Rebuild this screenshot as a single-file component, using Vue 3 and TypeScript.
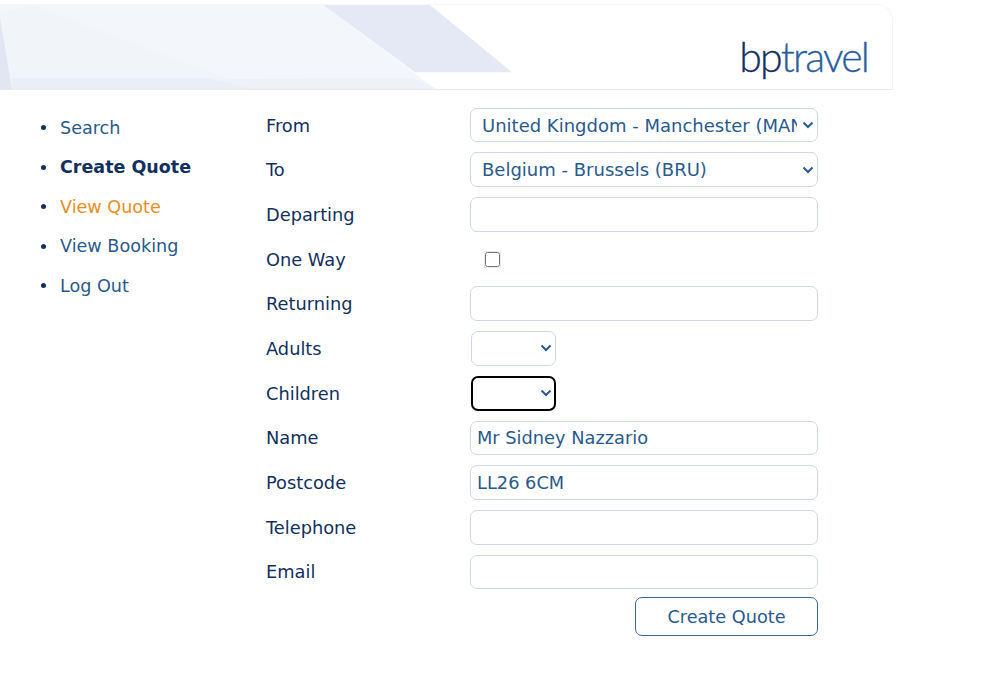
<script setup lang="ts">
import { ref } from 'vue'

const links = [
  { label: 'Search', kind: '' },
  { label: 'Create Quote', kind: 'current' },
  { label: 'View Quote', kind: 'hover' },
  { label: 'View Booking', kind: '' },
  { label: 'Log Out', kind: '' }
]

const from = ref('MAN')
const to = ref('BRU')
const name = ref('Mr Sidney Nazzario')
const postcode = ref('LL26 6CM')
</script>

<template>
  <div class="page">
    <header class="banner">
      <svg class="shapes" viewBox="0 0 893 86" preserveAspectRatio="none" aria-hidden="true">
        <polygon points="323,0 430,0 512,68 415,68" fill="#e4e9f5" />
        <polygon points="0,0 323,0 436,85 0,85" fill="#f3f6fb" />
        <polygon points="0,8 30,0 255,85 12,85" fill="#f1f4f9" />
        <polygon points="12,74 210,74 255,85 12,85" fill="#e9eef7" />
        <polygon points="0,12 12,85 0,85" fill="#e2e6f2" />
        <polygon points="210,75 415,74 436,85 255,85" fill="#eff1f9" />
      </svg>
      <div class="logo"><span class="bp">bp</span><span class="travel">travel</span></div>
    </header>

    <div class="main">
      <ul class="nav">
        <li v-for="link in links" :key="link.label" :class="link.kind">{{ link.label }}</li>
      </ul>

      <form class="form" @submit.prevent>
        <label>From</label>
        <select v-model="from" class="wide">
          <option value="MAN">United Kingdom - Manchester (MAN)</option>
        </select>

        <label>To</label>
        <select v-model="to" class="wide">
          <option value="BRU">Belgium - Brussels (BRU)</option>
        </select>

        <label>Departing</label>
        <input type="text">

        <label>One Way</label>
        <div class="check"><input type="checkbox"></div>

        <label>Returning</label>
        <input type="text">

        <label>Adults</label>
        <select class="small"><option></option></select>

        <label>Children</label>
        <select class="small focused"><option></option></select>

        <label>Name</label>
        <input v-model="name" type="text">

        <label>Postcode</label>
        <input v-model="postcode" type="text">

        <label>Telephone</label>
        <input type="text">

        <label>Email</label>
        <input type="text">

        <div class="actions">
          <button type="submit">Create Quote</button>
        </div>
      </form>
    </div>
  </div>
</template>

<style>
html, body {
  background: #fff;
}
</style>

<style scoped>
.page {
  width: 999px;
  height: 690px;
  padding-top: 4px;
  box-sizing: border-box;
  overflow: hidden;
  font-family: "DejaVu Sans", Verdana, sans-serif;
  font-size: 17.8px;
  color: #12305e;
}

.banner {
  position: relative;
  width: 893px;
  height: 86px;
  box-sizing: border-box;
  border-top: 1px solid #f6f7fa;
  border-right: 1px solid #f3f4f7;
  border-bottom: 1px solid #e9ebf0;
  border-top-right-radius: 16px;
  overflow: hidden;
  display: flex;
  justify-content: flex-end;
  align-items: flex-end;
  padding: 0 24px 8px 0;
}

.shapes {
  position: absolute;
  top: 0;
  left: 0;
  width: 893px;
  height: 85px;
}

.logo {
  position: relative;
  font-family: Lato, "Open Sans", sans-serif;
  font-weight: 300;
  font-size: 41px;
  line-height: 48px;
  letter-spacing: -1.8px;
  -webkit-text-stroke: 0.3px currentColor;
}

.bp {
  color: #12305e;
}

.travel {
  color: #2a5f9c;
}

.main {
  display: flex;
  align-items: flex-start;
}

.nav {
  width: 266px;
  box-sizing: border-box;
  margin: 0;
  padding: 18.2px 0 0 60px;
  list-style: none;
  font-size: 17.6px;
  color: #2a5a8c;
  flex-shrink: 0;
}

.nav li {
  display: flex;
  align-items: center;
  height: 39.5px;
}

.nav li::before {
  content: "";
  width: 5px;
  height: 5px;
  margin: 0 14px 0 -19px;
  border-radius: 50%;
  background: #12305e;
  flex-shrink: 0;
}

.nav .current {
  color: #12305e;
  font-weight: 700;
  font-size: 17.5px;
}

.nav .hover {
  color: #e98e1f;
}

.form {
  display: grid;
  grid-template-columns: 204px 348px;
  grid-auto-rows: 34.7px;
  row-gap: 10px;
  padding-top: 17.7px;
}

.form label {
  align-self: center;
}

input[type="text"],
select {
  box-sizing: border-box;
  height: 34.7px;
  width: 348px;
  margin: 0;
  border: 1px solid #ced9e8;
  border-radius: 7px;
  background-color: #fff;
  font-family: inherit;
  color: #2a5a8c;
  outline: none;
}

input[type="text"] {
  padding: 0 6px;
  font-size: 17.8px;
}

select {
  appearance: none;
  padding: 0 20px 0 11px;
  font-size: 18px;
  background-image: url("data:image/svg+xml,%3Csvg xmlns='http://www.w3.org/2000/svg' width='12' height='8' viewBox='0 0 12 8'%3E%3Cpath d='M1.5 1.5 6 6l4.5-4.5' fill='none' stroke='%232a5a8c' stroke-width='2'/%3E%3C/svg%3E");
  background-repeat: no-repeat;
  background-position: right 3px center;
}

select.small {
  width: 85px;
  margin-left: 1px;
}

select.focused {
  border: 2px solid #000;
  background-position: right 2px center;
}

.check {
  display: flex;
  align-items: center;
  padding-left: 15px;
}

.check input {
  width: 15px;
  height: 15px;
  margin: 0;
  box-shadow: 0 0 0 1px #e6e8ec;
  border-radius: 3px;
}

.actions {
  grid-column: 2;
  display: flex;
  justify-content: flex-end;
  margin-top: -2px;
}

button {
  box-sizing: border-box;
  width: 183px;
  height: 39px;
  border: 1px solid #3a6690;
  border-radius: 7px;
  background: #fff;
  font-family: inherit;
  font-size: 17.7px;
  color: #2a5a8c;
}
</style>
